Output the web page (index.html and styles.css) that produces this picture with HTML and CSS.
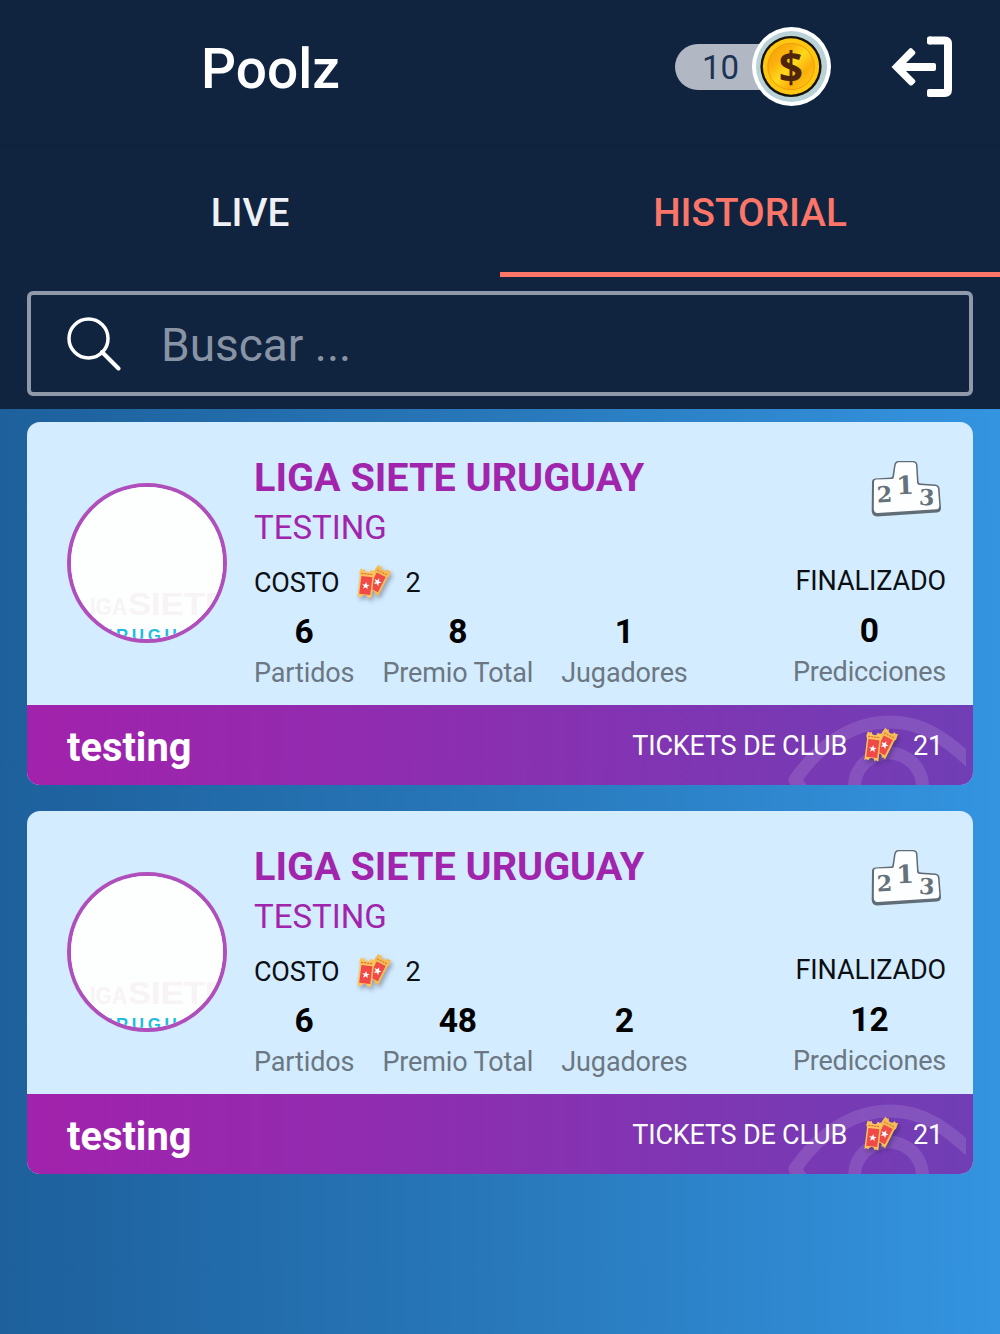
FILE: index.html
```html
<!DOCTYPE html>
<html lang="es">

<head>
    <meta charset="UTF-8">
    <meta name="viewport" content="width=device-width, initial-scale=1.0">
    <title>Poolz</title>
    <link rel="stylesheet" href="styles.css">
</head>

<body>
    <!-- shared icons -->
    <svg class="defs">
        <defs>
            <linearGradient id="gold" x1="0" y1="0" x2="1" y2="1">
                <stop offset="0" stop-color="#f59a0c" />
                <stop offset="0.3" stop-color="#fbb30c" />
                <stop offset="0.5" stop-color="#ffd91c" />
                <stop offset="0.7" stop-color="#fbae0c" />
                <stop offset="1" stop-color="#ffd514" />
            </linearGradient>
            <symbol id="tickets" viewBox="0 0 40 40">
                <g transform="translate(25 18) rotate(27)">
                    <path d="M-7-15a2.500 2.500 0 0 0 4 0a3 3 0 0 0 6 0a2.500 2.500 0 0 0 4 0l1 6l-1 2v21a2.500 2.500 0 0 0-4 0a3 3 0 0 0-6 0a2.500 2.500 0 0 0-4 0v-21l-1-2z" fill="#f4bc55" />
                    <path d="M-5-7h10v17h-10z" fill="#ee4b49" />
                    <path d="M-6-9.500h12" stroke="#dc7a3c" stroke-width="1.200" stroke-dasharray="2 1" />
                    <path d="M0-3l1 2.800h3l-2.300 1.800l.8 2.900l-2.500-1.700l-2.500 1.700l.8-2.900l-2.300-1.800h3z" fill="#fff" />
                </g>
                <g transform="translate(13 21) rotate(7)">
                    <path d="M-7-15a2.500 2.500 0 0 0 4 0a3 3 0 0 0 6 0a2.500 2.500 0 0 0 4 0l1 5l-1 2v22a2.500 2.500 0 0 0-4 0a3 3 0 0 0-6 0a2.500 2.500 0 0 0-4 0v-22l-1-2z" fill="#fbc55c" />
                    <path d="M-5.500-7.500h11v18h-11z" fill="#f04947" />
                    <path d="M-6-10h12" stroke="#e8683c" stroke-width="1.200" stroke-dasharray="2 1" />
                    <path d="M0-2l1 2.600h2.800l-2.200 1.700l.8 2.700l-2.400-1.600l-2.400 1.600l.8-2.700l-2.200-1.700h2.800z" fill="#fff" />
                </g>
            </symbol>
            <symbol id="podium" viewBox="0 0 72 60">
                <path d="M5 19.500L21 18.500Q22.500 18.500 22.500 16.500L24 7Q24.500 2 28.500 2L43 2Q47 2 47.500 6L48.500 22Q48.500 24.500 51 24.500L65.500 25.500Q69 26 69.500 29L71 49Q71 53 67 53.500L7 57.500Q2 57 1.700 52L2 23Q2 20 5 19.500z" fill="#606c76" />
                <path d="M6 20.500L22 20Q24 20 24 17.500L25.500 7Q26 3.300 29 3.300L42.500 3.300Q45.700 3.300 46 6L47 23Q47 26 50 26L65 27Q67.800 27 68 30L69.300 46.500Q69.300 50 66.500 50.300L7.500 54Q4 54 3.800 50L4 23Q4 20.700 6 20.500z" fill="#fdfeff" />
                <g class="podium-num">
                    <text x="15" y="43" font-size="22" transform="rotate(-3 15 43)">2</text>
                    <text x="35.500" y="35" font-size="25" transform="rotate(-2 35 35)">1</text>
                    <text x="56.500" y="46" font-size="22" transform="rotate(3 56 46)">3</text>
                </g>
            </symbol>
            <symbol id="eye" viewBox="0 0 180 70">
                <g fill="none" stroke="#fff" stroke-opacity="0.12" stroke-width="13" stroke-linejoin="round">
                    <path d="M24 86L9 65C35 27 69 7 104 7C136 7 160 22 196 58" />
                    <circle cx="102.500" cy="72" r="34" />
                </g>
            </symbol>
            <symbol id="logo" viewBox="0 0 152 152">
                <rect width="152" height="152" fill="#fdfffe" />
                <text x="6" y="128" class="logo-liga" textLength="50" lengthAdjust="spacingAndGlyphs">LIGA</text>
                <text x="57" y="128" class="logo-siete" textLength="100" lengthAdjust="spacingAndGlyphs">SIETE</text>
                <text x="29" y="153.500" class="logo-uru" textLength="106">URUGUAY</text>
            </symbol>
        </defs>
    </svg>

    <header class="topbar">
        <h1 class="brand">Poolz</h1>
        <div class="coins">
            <span class="coins-num">10</span>
            <svg class="coin" viewBox="0 0 80 80">
                <circle cx="40" cy="40" r="40" fill="#fff" />
                <circle cx="40" cy="40" r="36" fill="#b9d2d7" />
                <circle cx="39.500" cy="40" r="31" fill="#16130b" />
                <circle cx="39.500" cy="40" r="28.500" fill="#ffc710" />
                <circle cx="39.500" cy="40" r="23.500" fill="url(#gold)" stroke="#f09a0b" stroke-width="1" />
                <text x="39.500" y="56.500" class="coin-sign">$</text>
            </svg>
        </div>
        <svg class="logout" viewBox="0 0 62 62">
            <path d="M38.500 4.500H53.500Q57 4.500 57 8V53.500Q57 57 53.500 57H38.500" fill="none" stroke="#fff" stroke-width="8" stroke-linejoin="round" />
            <path d="M38 0.500h2v8h-2q-2 0-2-2v-4q0-2 2-2zM38 53h2v8h-2q-2 0-2-2v-4q0-2 2-2z" fill="#fff" />
            <path d="M0.500 31L18.500 12.500Q20 11.500 21.500 13L24 15.500Q25 17 24 18L15 27H43Q45 27 45 29V33Q45 35 43 35H15L24 44Q25 45 24 46.500L21.500 49Q20 50 18.500 49Z" fill="#fff" />
        </svg>
    </header>

    <nav class="tabs">
        <div class="tab">LIVE</div>
        <div class="tab active">HISTORIAL</div>
    </nav>

    <div class="search-wrap">
        <div class="search">
            <svg class="search-icon" viewBox="0 0 54 54">
                <circle cx="21.500" cy="21.500" r="19.500" fill="none" stroke="#fff" stroke-width="3.500" />
                <path d="M35 35L51.500 51.500" stroke="#fff" stroke-width="4" stroke-linecap="round" />
            </svg>
            <span>Buscar ...</span>
        </div>
    </div>

    <main class="list">
        <article class="card">
            <div class="card-body">
                <svg class="logo"><use href="#logo" /></svg>
                <div class="info">
                    <h2>LIGA SIETE URUGUAY</h2>
                    <h3>TESTING</h3>
                    <div class="cost"><span>COSTO</span><svg class="tickets"><use href="#tickets" /></svg><span>2</span></div>
                    <div class="stats">
                        <div class="stat"><b>6</b><span>Partidos</span></div>
                        <div class="stat"><b>8</b><span>Premio Total</span></div>
                        <div class="stat"><b>1</b><span>Jugadores</span></div>
                    </div>
                </div>
                <div class="side">
                    <svg class="podium"><use href="#podium" /></svg>
                    <div class="status">FINALIZADO</div>
                    <div class="stat"><b>0</b><span>Predicciones</span></div>
                </div>
            </div>
            <div class="card-foot">
                <svg class="eye"><use href="#eye" /></svg>
                <strong>testing</strong>
                <div class="club"><span>TICKETS DE CLUB</span><svg class="tickets"><use href="#tickets" /></svg><span>21</span></div>
            </div>
        </article>

        <article class="card">
            <div class="card-body">
                <svg class="logo"><use href="#logo" /></svg>
                <div class="info">
                    <h2>LIGA SIETE URUGUAY</h2>
                    <h3>TESTING</h3>
                    <div class="cost"><span>COSTO</span><svg class="tickets"><use href="#tickets" /></svg><span>2</span></div>
                    <div class="stats">
                        <div class="stat"><b>6</b><span>Partidos</span></div>
                        <div class="stat"><b>48</b><span>Premio Total</span></div>
                        <div class="stat"><b>2</b><span>Jugadores</span></div>
                    </div>
                </div>
                <div class="side">
                    <svg class="podium"><use href="#podium" /></svg>
                    <div class="status">FINALIZADO</div>
                    <div class="stat"><b>12</b><span>Predicciones</span></div>
                </div>
            </div>
            <div class="card-foot">
                <svg class="eye"><use href="#eye" /></svg>
                <strong>testing</strong>
                <div class="club"><span>TICKETS DE CLUB</span><svg class="tickets"><use href="#tickets" /></svg><span>21</span></div>
            </div>
        </article>
    </main>
</body>

</html>
```

FILE: styles.css
```css
* {
    margin: 0;
    padding: 0;
    box-sizing: border-box;
}

body {
    height: 1334px;
    overflow: hidden;
    display: flex;
    flex-direction: column;
    font-family: Roboto, "Liberation Sans", sans-serif;
    background-color: #102440;
}

svg {
    display: block;
    flex: none;
}

.defs {
    width: 0;
    height: 0;
}

/* header */
.topbar {
    height: 145px;
    padding: 0 47px 12px 201px;
    display: flex;
    align-items: center;
    box-shadow: 0 1px 4px rgba(0, 0, 0, 0.12);
}

.brand {
    font-size: 55px;
    font-weight: 500;
    color: #fff;
    margin-top: 4px;
}

.coins {
    margin-left: auto;
    display: flex;
    align-items: center;
}

.coins-num {
    width: 100px;
    height: 46px;
    margin-right: -23px;
    padding-left: 27px;
    border-radius: 23px 0 0 23px;
    background-color: #b1b8c4;
    color: #1d3354;
    font-size: 33px;
    line-height: 48px;
}

.coin {
    width: 79px;
    height: 79px;
}

.coin-sign {
    font: bold 43px "Noto Sans", sans-serif;
    fill: #4f2609;
    text-anchor: middle;
}

.logout {
    width: 62px;
    height: 62px;
    margin-left: 60px;
}

/* tabs */
.tabs {
    height: 132px;
    display: flex;
}

.tab {
    flex: 1;
    text-align: center;
    font-size: 38.7px;
    font-weight: 500;
    line-height: 136px;
    color: #eef1f5;
}

.tab.active {
    color: #fb7568;
    border-bottom: 5px solid #fb7568;
}

/* search */
.search-wrap {
    height: 132px;
    padding: 14px 27px 13px;
}

.search {
    height: 105px;
    padding: 3px 0 0 36px;
    border: 4px solid #8f99a9;
    border-radius: 6px;
    display: flex;
    align-items: center;
    gap: 40px;
    font-size: 46px;
    color: #8893a4;
}

.search-icon {
    width: 54px;
    height: 54px;
    margin-top: -3px;
}

/* list */
.list {
    flex: 1;
    padding: 13px 27px;
    display: flex;
    flex-direction: column;
    gap: 26px;
    background: linear-gradient(90deg, #1d609c 0%, #2878ba 50%, #3494e0 100%);
}

.card {
    height: 363px;
    border-radius: 13px;
    overflow: hidden;
    background-color: #d4ecff;
}

.card-body {
    height: 283px;
    padding: 35px 27px 0 40px;
    display: flex;
}

.logo {
    width: 160px;
    height: 160px;
    margin-top: 26px;
    border: 4px solid #b04fbb;
    border-radius: 50%;
    overflow: hidden;
}

.logo-liga {
    font: bold 24px "Liberation Sans", sans-serif;
    fill: #f8f4f5;
}

.logo-siete {
    font: bold 31px "Liberation Sans", sans-serif;
    fill: #f8f4f5;
}

.logo-uru {
    font: bold 17px "Liberation Sans", sans-serif;
    fill: #20bde0;
}

.info {
    margin-left: 27px;
}

.info h2 {
    font-size: 39.6px;
    line-height: 42px;
    font-weight: 700;
    color: #a124ad;
}

.info h3 {
    font-size: 33px;
    line-height: 40px;
    margin-top: 9px;
    font-weight: 400;
    color: #a124ad;
}

.cost,
.club {
    display: flex;
    align-items: center;
    font-size: 27px;
    line-height: 32px;
    letter-spacing: -0.2px;
}

.cost {
    height: 40px;
    margin-top: 14px;
    padding-top: 1px;
    color: #0b0f14;
}

.tickets {
    width: 40px;
    height: 40px;
    margin: 0 13px;
    filter: drop-shadow(2px 3px 2px rgba(30, 30, 60, 0.35));
}

.stats {
    display: flex;
    gap: 28px;
    margin-top: 9px;
}

.stat {
    display: flex;
    flex-direction: column;
    align-items: center;
}

.stat b {
    font-size: 33.5px;
    line-height: 42px;
    color: #000;
}

.stat span {
    font-size: 27px;
    line-height: 32px;
    margin-top: 4px;
    letter-spacing: -0.12px;
    color: #6b7782;
}

.side {
    margin-left: auto;
    display: flex;
    flex-direction: column;
    align-items: flex-end;
}

.podium {
    width: 72px;
    height: 60px;
    margin: 2px 4px 0 0;
}

.podium-num {
    font-family: "DejaVu Serif", serif;
    font-weight: bold;
    fill: #65717b;
    text-anchor: middle;
}

.status {
    height: 40px;
    margin-top: 42px;
    font-size: 27px;
    line-height: 40px;
    letter-spacing: -0.1px;
    color: #0b0f14;
}

.side .stat {
    margin-top: 9px;
}

.side .stat span {
    letter-spacing: -0.2px;
}

.card-foot {
    position: relative;
    height: 80px;
    padding: 0 30px 0 40px;
    display: flex;
    align-items: center;
    justify-content: space-between;
    color: #fff;
    background: linear-gradient(90deg, #a222ac 0%, #703eb5 100%);
}

.card-foot strong {
    font-size: 39.8px;
    padding-top: 4px;
}

.card-foot .club {
    position: relative;
    padding-top: 1px;
}

/* watermark behind the footer text */
.eye {
    position: absolute;
    right: 7px;
    bottom: 0;
    width: 180px;
    height: 70px;
}
```
